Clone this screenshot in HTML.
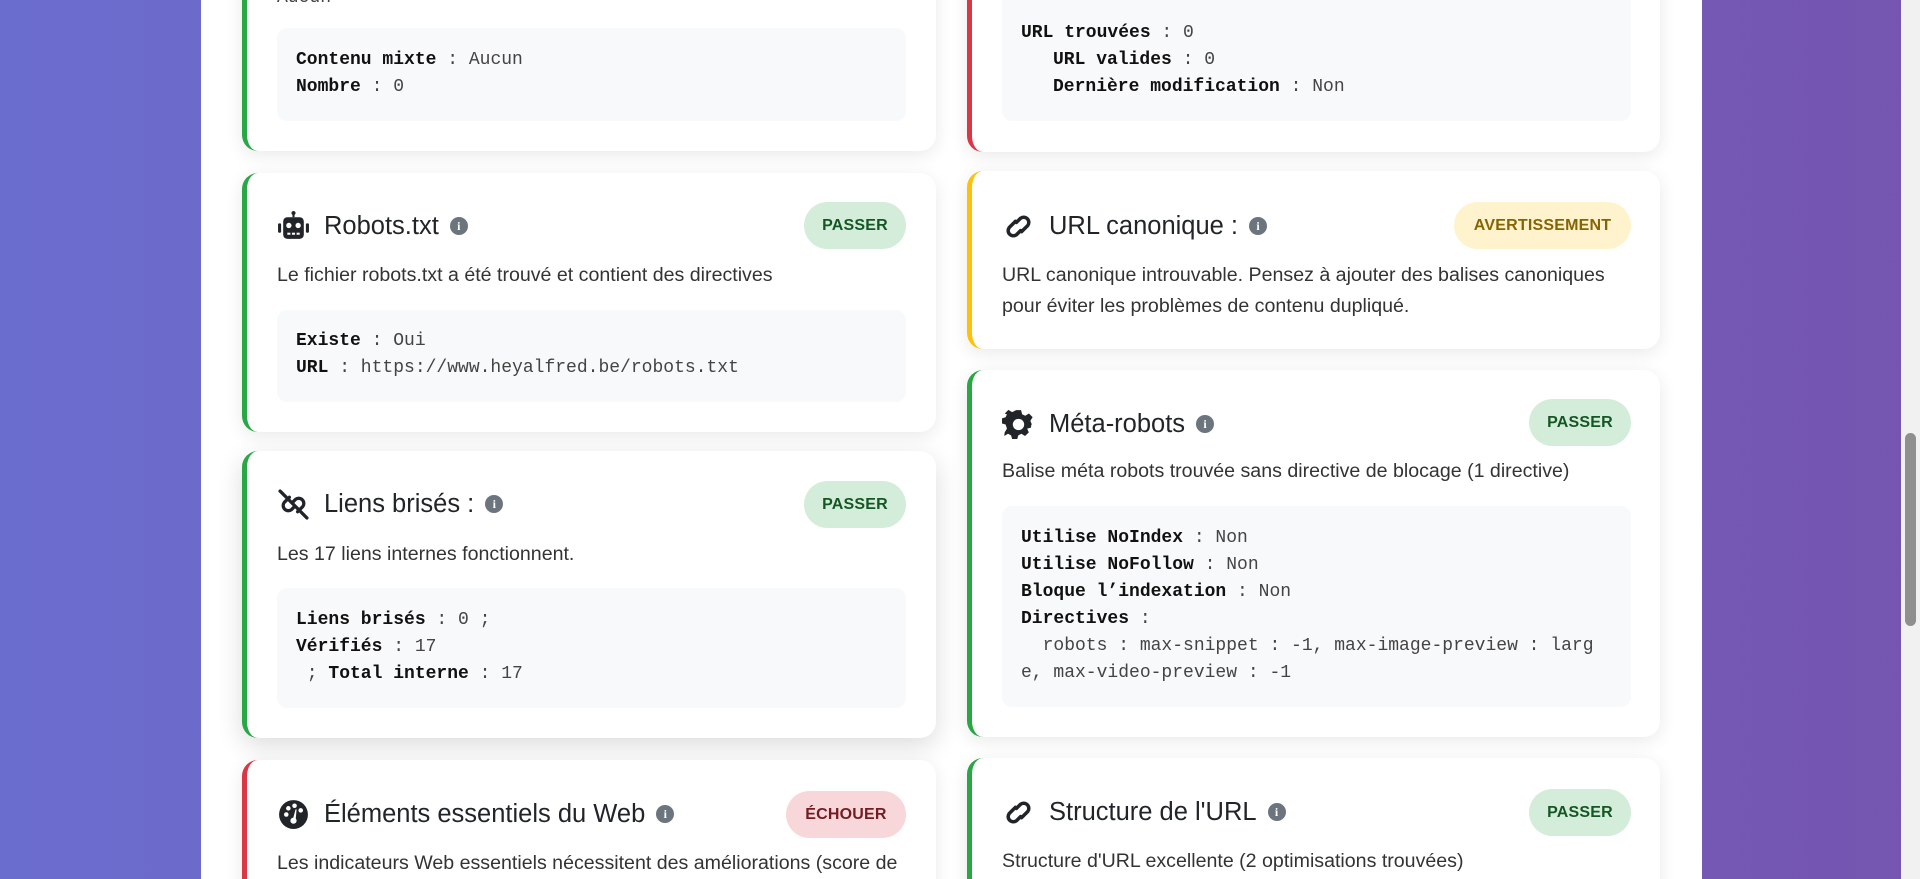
<!DOCTYPE html>
<html><head><meta charset="utf-8"><style>
*{margin:0;padding:0;box-sizing:border-box}
html,body{width:1920px;height:879px;overflow:hidden}
body{background:linear-gradient(90deg,#6b6dce 0%,#6e62c2 50%,#7555b0 100%);font-family:"Liberation Sans",sans-serif;color:#212529;position:relative}
.wrap{position:absolute;left:201px;top:0;width:1501px;height:879px;background:#fff}
.sb{position:absolute;left:1901px;top:0;width:19px;height:879px;background:#f1f1f1}
.thumb{position:absolute;left:1905px;top:433px;width:11px;height:193px;background:#8f8f8f;border-radius:6px}
.card{position:absolute;background:#fff;border-radius:16px;box-shadow:0 4px 18px rgba(0,0,0,.09);border-left:5px solid #28a745}
.g{border-left-color:#28a745}.r{border-left-color:#dc3545}.y{border-left-color:#ffc107}
.t{position:absolute;height:40px;line-height:40px;font-size:25.5px;display:flex;align-items:center;white-space:nowrap}
.t svg.ic{width:33px;height:33px;margin-right:14px}
.t .i{width:18px;height:18px;border-radius:50%;background:#6c757d;color:#fff;font:bold 12px "Liberation Serif",serif;display:inline-flex;align-items:center;justify-content:center;margin-left:11px}
.b{position:absolute;height:47px;line-height:47px;border-radius:24px;font-size:16px;font-weight:bold;text-align:center;letter-spacing:.2px}
.bp{background:#d4edda;color:#155724;width:102px}
.bw{background:#fff3cd;color:#856404;width:177px}
.bf{background:#f8d7da;color:#721c24;width:120px}
.d{position:absolute;font-size:19.6px;line-height:31px;color:#333;white-space:nowrap}
.c{position:absolute;background:#f8f9fa;border-radius:10px}
.l{position:absolute;font-family:"Liberation Mono",monospace;font-size:18px;line-height:20px;height:20px;white-space:pre;color:#444}
.l b{color:#111}
</style></head><body>
<div class="wrap"></div>

<div class="card g" style="left:242px;top:-40px;width:694px;height:191px"></div>
<div class="l" style="left:277px;top:-12px">Aucun</div>
<div class="c" style="left:277px;top:28px;width:629px;height:93px"></div>
<div class="l" style="left:296px;top:50px"><b>Contenu mixte</b> : Aucun</div>
<div class="l" style="left:296px;top:77px"><b>Nombre</b> : 0</div>

<div class="card g" style="left:242px;top:173px;width:694px;height:259px"></div>
<div class="t" style="left:277px;top:206px"><svg class="ic" viewBox="0 0 32 32"><rect x="15" y="2" width="2" height="5" fill="#212529"/><circle cx="16" cy="3" r="2" fill="#212529"/><rect x="6" y="7" width="20" height="21" rx="4" fill="#212529"/><rect x="1" y="13" width="3" height="9" rx="1" fill="#212529"/><rect x="28" y="13" width="3" height="9" rx="1" fill="#212529"/><circle cx="11.5" cy="15" r="2.6" fill="#fff"/><circle cx="20.5" cy="15" r="2.6" fill="#fff"/><rect x="10" y="22" width="3" height="2" fill="#fff"/><rect x="14.5" y="22" width="3" height="2" fill="#fff"/><rect x="19" y="22" width="3" height="2" fill="#fff"/></svg>Robots.txt<span class="i">i</span></div>
<div class="b bp" style="left:804px;top:202px">PASSER</div>
<div class="d" style="left:277px;top:260px">Le fichier robots.txt a été trouvé et contient des directives</div>
<div class="c" style="left:277px;top:310px;width:629px;height:92px"></div>
<div class="l" style="left:296px;top:331px"><b>Existe</b> : Oui</div>
<div class="l" style="left:296px;top:358px"><b>URL</b> : https://www.heyalfred.be/robots.txt</div>

<div class="card g" style="left:242px;top:451px;width:694px;height:287px;box-shadow:0 8px 26px rgba(0,0,0,.14)"></div>
<div class="t" style="left:277px;top:484px"><svg class="ic" viewBox="0 0 32 32" fill="none" stroke="#212529" stroke-width="3.2" stroke-linecap="round"><path d="M12 9l-5 5a5 5 0 007 7l2-2"/><path d="M20 23l5-5a5 5 0 00-7-7l-2 2"/><path d="M3 3l26 26"/></svg>Liens brisés :<span class="i">i</span></div>
<div class="b bp" style="left:804px;top:481px">PASSER</div>
<div class="d" style="left:277px;top:539px">Les 17 liens internes fonctionnent.</div>
<div class="c" style="left:277px;top:588px;width:629px;height:120px"></div>
<div class="l" style="left:296px;top:610px"><b>Liens brisés</b> : 0 ;</div>
<div class="l" style="left:296px;top:637px"><b>Vérifiés</b> : 17</div>
<div class="l" style="left:296px;top:664px"> ; <b>Total interne</b> : 17</div>

<div class="card r" style="left:242px;top:760px;width:694px;height:160px"></div>
<div class="t" style="left:277px;top:794px"><svg class="ic" viewBox="0 0 32 32"><circle cx="16" cy="16" r="14" fill="#212529"/><circle cx="9" cy="16" r="2.2" fill="#fff"/><circle cx="11" cy="10" r="2.2" fill="#fff"/><circle cx="17" cy="7.5" r="2.2" fill="#fff"/><circle cx="23" cy="12" r="2.2" fill="#fff"/><path d="M15 22l3-11 1 0-1 11z" fill="#fff"/><circle cx="16" cy="22" r="3" fill="#fff"/></svg>Éléments essentiels du Web<span class="i">i</span></div>
<div class="b bf" style="left:786px;top:791px">ÉCHOUER</div>
<div class="d" style="left:277px;top:848px">Les indicateurs Web essentiels nécessitent des améliorations (score de</div>

<div class="card r" style="left:967px;top:-40px;width:693px;height:192px"></div>
<div class="c" style="left:1002px;top:-10px;width:629px;height:131px"></div>
<div class="l" style="left:1021px;top:23px"><b>URL trouvées</b> : 0</div>
<div class="l" style="left:1053px;top:50px"><b>URL valides</b> : 0</div>
<div class="l" style="left:1053px;top:77px"><b>Dernière modification</b> : Non</div>

<div class="card y" style="left:967px;top:171px;width:693px;height:178px"></div>
<div class="t" style="left:1002px;top:206px"><svg class="ic" viewBox="0 0 32 32" fill="none" stroke="#212529" stroke-width="3.4" stroke-linecap="round"><path d="M13 11l-6 6a5 5 0 007 7l4-4"/><path d="M19 21l6-6a5 5 0 00-7-7l-4 4"/></svg>URL canonique :<span class="i">i</span></div>
<div class="b bw" style="left:1454px;top:202px">AVERTISSEMENT</div>
<div class="d" style="left:1002px;top:260px">URL canonique introuvable. Pensez à ajouter des balises canoniques</div>
<div class="d" style="left:1002px;top:291px">pour éviter les problèmes de contenu dupliqué.</div>

<div class="card g" style="left:967px;top:370px;width:693px;height:367px"></div>
<div class="t" style="left:1002px;top:404px"><svg class="ic" viewBox="0 0 32 32"><path fill="#212529" fill-rule="evenodd" d="M13.5 2h5l1 4 3 1.5 3.6-2.2 3.6 3.6-2.2 3.6L29 16l-.5 0 0 0-.5 3-3.6 1 1.6 3.6-3.6 3.6-3.6-2.2-3 1.5-1 3.5h-5l-1-3.5-3-1.5-3.6 2.2L2.6 23.6 4.8 20 3.5 16 0 15v-5l3.5-1L4.8 6 2.6 5.4 6.2 1.8l3.6 2.2 3-1.5z M16 10.5a5.5 5.5 0 100 11 5.5 5.5 0 000-11z"/></svg>Méta-robots<span class="i">i</span></div>
<div class="b bp" style="left:1529px;top:399px">PASSER</div>
<div class="d" style="left:1002px;top:456px">Balise méta robots trouvée sans directive de blocage (1 directive)</div>
<div class="c" style="left:1002px;top:506px;width:629px;height:201px"></div>
<div class="l" style="left:1021px;top:528px"><b>Utilise NoIndex</b> : Non</div>
<div class="l" style="left:1021px;top:555px"><b>Utilise NoFollow</b> : Non</div>
<div class="l" style="left:1021px;top:582px"><b>Bloque l’indexation</b> : Non</div>
<div class="l" style="left:1021px;top:609px"><b>Directives</b> :</div>
<div class="l" style="left:1021px;top:636px">  robots : max-snippet : -1, max-image-preview : larg</div>
<div class="l" style="left:1021px;top:663px">e, max-video-preview : -1</div>

<div class="card g" style="left:967px;top:758px;width:693px;height:160px"></div>
<div class="t" style="left:1002px;top:792px"><svg class="ic" viewBox="0 0 32 32" fill="none" stroke="#212529" stroke-width="3.4" stroke-linecap="round"><path d="M13 11l-6 6a5 5 0 007 7l4-4"/><path d="M19 21l6-6a5 5 0 00-7-7l-4 4"/></svg>Structure de l'URL<span class="i">i</span></div>
<div class="b bp" style="left:1529px;top:789px">PASSER</div>
<div class="d" style="left:1002px;top:846px">Structure d'URL excellente (2 optimisations trouvées)</div>

<div class="sb"></div><div class="thumb"></div>
</body></html>
